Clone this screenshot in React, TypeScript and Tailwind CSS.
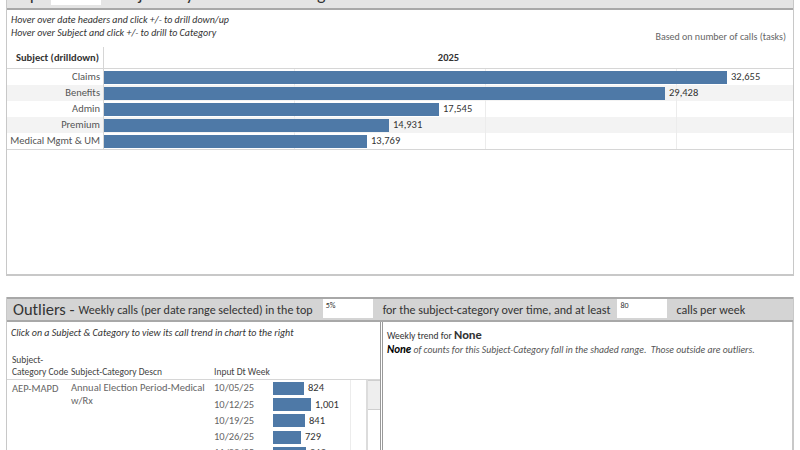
import React from "react";

const F = { fontFamily: "Carlito, Lato, sans-serif" };

const rows = [
  { label: "Claims", v: 32655, shade: false },
  { label: "Benefits", v: 29428, shade: true },
  { label: "Admin", v: 17545, shade: false },
  { label: "Premium", v: 14931, shade: true },
  { label: "Medical Mgmt & UM", v: 13769, shade: false },
];

const weeks = [
  { d: "10/05/25", v: 824 },
  { d: "10/12/25", v: 1001 },
  { d: "10/19/25", v: 841 },
  { d: "10/26/25", v: 729 },
  { d: "11/02/25", v: 862 },
];

const fmt = (n: number) => n.toLocaleString("en-US");

export default function App() {
  return (
    <div className="w-[800px] h-[450px] overflow-hidden bg-white" style={F}>
      <div className="pl-[6px] w-[794px] flex flex-col">
        {/* Top panel */}
        <div className="h-[276px] border-x border-b-2 border-[#c8c8c8] flex flex-col">
          <div className="h-[10px] overflow-hidden bg-[#e4e4e4] border-b-2 border-[#a8a8a8] shrink-0">
            <div className="flex items-end h-[8px] pl-[6px] text-[18px] leading-none text-[#333] whitespace-nowrap">
              <span className="mb-[5px]">Top</span>
              <span className="w-[50px] h-[20px] bg-white mb-[3px] ml-[12px]" />
              <span className="mb-[5px] ml-[10px]">Subjects by Volume - Ranking</span>
            </div>
          </div>
          <div className="flex justify-between pl-[4px] pr-[7px] pt-[3px]">
            <div className="text-[10px] italic text-[#333] leading-[13px]">
              <div>Hover over date headers and click +/- to drill down/up</div>
              <div>Hover over Subject and click +/- to drill to Category</div>
            </div>
            <div className="text-[10px] text-[#666] pt-[16px]">Based on number of calls (tasks)</div>
          </div>
          <div className="mt-[3px] flex flex-col">
            <div className="flex h-[22px] border-b border-[#d6d6d6]">
              <div className="w-[97px] border-r border-[#d6d6d6] pr-[4px] text-[10.5px] font-bold text-[#333] flex items-center justify-end whitespace-nowrap">
                Subject (drilldown)
              </div>
              <div className="flex-1 flex items-center justify-center text-[10.5px] font-bold text-[#333]">2025</div>
            </div>
            {rows.map((r) => (
              <div key={r.label} className={`flex h-[16px] ${r.shade ? "bg-[#f3f3f3]" : "bg-white"}`}>
                <div className="w-[97px] border-r border-[#d6d6d6] pr-[3px] text-[10.5px] text-[#555] flex items-center justify-end whitespace-nowrap">
                  {r.label}
                </div>
                <div className="flex-1 relative flex items-center">
                  <div className="absolute left-[190px] top-0 bottom-0 w-px bg-[#ececec]" />
                  <div className="absolute left-[381px] top-0 bottom-0 w-px bg-[#ececec]" />
                  <div className="absolute left-[572px] top-0 bottom-0 w-px bg-[#ececec]" />
                  <div className="relative h-[13px] bg-[#4e79a7]" style={{ width: Math.round(r.v * 0.019078) }} />
                  <span className="relative ml-[4px] text-[10.5px] text-[#333]">{fmt(r.v)}</span>
                </div>
              </div>
            ))}
            <div className="border-t border-[#d6d6d6]" />
          </div>
        </div>

        {/* Bottom panel */}
        <div className="mt-[21px] border-x border-[#c8c8c8] flex flex-col">
          <div className="h-[25px] bg-[#d4d4d4] border-y-2 border-[#a8a8a8] flex items-center pl-[6px] text-[#333] whitespace-nowrap">
            <span className="text-[16.5px] leading-none">Outliers - </span>
            <span className="text-[12px] ml-[4px]">Weekly calls (per date range selected) in the top</span>
            <div className="ml-[10px] w-[50px] h-[19px] bg-white text-[8px] pl-[3px] leading-[12px] self-start">5%</div>
            <span className="text-[12px] ml-[10px]">for the subject-category over time, and at least</span>
            <div className="ml-[7px] w-[50px] h-[19px] bg-white text-[8px] pl-[3px] leading-[12px] self-start">80</div>
            <span className="text-[12px] ml-[9px]">calls per week</span>
          </div>
          <div className="flex h-[140px]">
            <div className="w-[376px] border-r-[3px] border-double border-[#999] flex flex-col">
              <div className="pl-[4px] pt-[3px] text-[10px] italic text-[#333]">
                Click on a Subject &amp; Category to view its call trend in chart to the right
              </div>
              <div className="mt-[14px] flex items-end text-[9.5px] text-[#444] leading-[12px] border-b border-[#d6d6d6] pb-[1px]">
                <div className="w-[64px] pl-[5px]">
                  Subject-
                  <br />
                  <span className="whitespace-nowrap">Category Code</span>
                </div>
                <div className="w-[142px]">Subject-Category Descn</div>
                <div className="pl-[1px]">Input Dt Week</div>
              </div>
              <div className="flex text-[10.5px] text-[#666]">
                <div className="w-[64px] pl-[5px] pt-[1px]">AEP-MAPD</div>
                <div className="w-[142px] pt-[1px] leading-[13px]">
                  Annual Election Period-Medical
                  <br />
                  w/Rx
                </div>
                <div className="flex flex-col">
                  {weeks.map((w) => (
                    <div key={w.d} className="flex h-[16.3px] items-center">
                      <div className="w-[60px] pl-[1px]">{w.d}</div>
                      <div className="h-[13px] bg-[#4e79a7]" style={{ width: Math.round(w.v * 0.038) }} />
                      <span className="ml-[4px] text-[#333]">{fmt(w.v)}</span>
                    </div>
                  ))}
                </div>
                <div className="flex-1" />
                <div className="w-px bg-[#ececec] mr-[15px]" />
                <div className="w-[14px] border-l-2 border-[#dcdcdc] flex flex-col">
                  <div className="h-[30px] bg-[#eeeeee] border-y border-[#cfcfcf]" />
                </div>
              </div>
            </div>
            <div className="flex-1 pl-[4px] pt-[6px] text-[#333] border-r border-[#c8c8c8]">
              <div className="text-[9.5px] leading-[14px]">
                Weekly trend for <span className="text-[12.5px] font-bold">None</span>
              </div>
              <div className="text-[9.75px] italic text-[#555] leading-[14px]">
                <span className="text-[11px] font-black text-black">None</span> of counts for this Subject-Category fall in the shaded range.&nbsp; Those outside are outliers.
              </div>
            </div>
          </div>
        </div>
      </div>
    </div>
  );
}
